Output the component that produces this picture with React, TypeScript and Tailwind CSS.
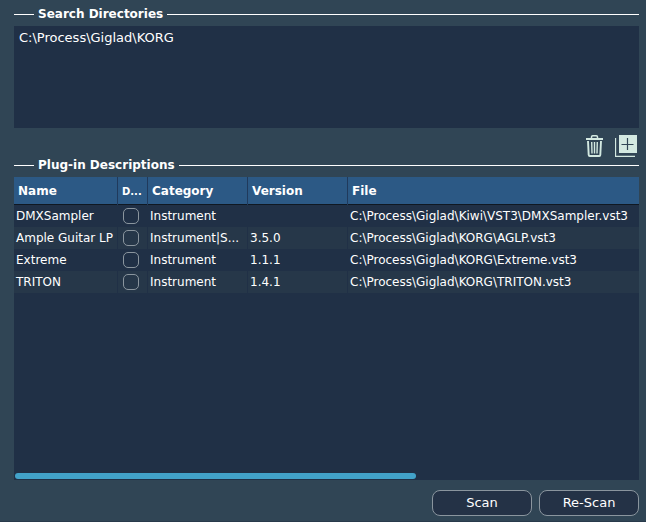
import { useState } from "react";

const directories = ["C:\\Process\\Giglad\\KORG"];

const plugins = [
  {
    name: "DMXSampler",
    category: "Instrument",
    version: "",
    file: "C:\\Process\\Giglad\\Kiwi\\VST3\\DMXSampler.vst3",
  },
  {
    name: "Ample Guitar LP",
    category: "Instrument|S...",
    version: "3.5.0",
    file: "C:\\Process\\Giglad\\KORG\\AGLP.vst3",
  },
  {
    name: "Extreme",
    category: "Instrument",
    version: "1.1.1",
    file: "C:\\Process\\Giglad\\KORG\\Extreme.vst3",
  },
  {
    name: "TRITON",
    category: "Instrument",
    version: "1.4.1",
    file: "C:\\Process\\Giglad\\KORG\\TRITON.vst3",
  },
];

function SectionTitle({ title }: { title: string }) {
  return (
    <div className="flex h-4 items-center gap-1">
      <div className="h-px w-5 bg-white" />
      <h2 className="text-[12px] leading-4 font-bold whitespace-nowrap">{title}</h2>
      <div className="h-px flex-1 bg-white" />
    </div>
  );
}

function TrashIcon() {
  return (
    <svg width="17" height="22" viewBox="0 0 17 22" fill="none" stroke="#d3e9e1">
      <path d="M5.500 3V2Q5.500 .8 6.700 .8h3.600Q11.500 .8 11.500 2V3" strokeWidth="1.500" />
      <path d="M0 4h17" strokeWidth="2" />
      <path d="M2 6L2.700 20Q2.800 21 3.700 21H13.300Q14.200 21 14.300 20L15 6" strokeWidth="1.900" />
      <path d="M5.700 7L6 18.500M8.500 7V18.500M11.300 7L11 18.500" strokeWidth="1.400" />
    </svg>
  );
}

function AddIcon() {
  return (
    <svg width="22" height="22" viewBox="0 0 22 22" fill="none">
      <path d="M.5 3v18.500H20" stroke="#d3e9e1" strokeWidth="1.300" />
      <path d="M4 0h18v18H4z" fill="#d3e9e1" />
      <path d="M12.500 3v12M6.500 9.500h12" stroke="#304555" strokeWidth="1.200" />
    </svg>
  );
}

export default function App() {
  const [disabled, setDisabled] = useState<string[]>([]);

  const toggle = (name: string) => {
    setDisabled((prev) =>
      prev.includes(name) ? prev.filter((n) => n !== name) : [...prev, name]
    );
  };

  return (
    <div className="flex min-h-screen w-full flex-col border-b border-[#283a4b] bg-[#304555] pt-1.5 pr-[7px] pb-[5px] pl-3.5 font-['DejaVu_Sans',sans-serif] text-[12px] text-white">
      <SectionTitle title="Search Directories" />
      <ul className="mt-1 h-[102px] overflow-y-auto bg-[#203046] px-[5px] py-1 text-[13px]">
        {directories.map((dir) => (
          <li key={dir} className="leading-4">
            {dir}
          </li>
        ))}
      </ul>

      <div className="flex items-center justify-end gap-3 px-0.5 pt-[7px]">
        <button type="button" aria-label="Remove directory">
          <TrashIcon />
        </button>
        <button type="button" aria-label="Add directory">
          <AddIcon />
        </button>
      </div>

      <SectionTitle title="Plug-in Descriptions" />
      <div className="mt-1 flex flex-1 flex-col overflow-hidden bg-[#203046]">
        <table className="w-full table-fixed border-separate border-spacing-0 text-left">
          <colgroup>
            <col className="w-[104px]" />
            <col className="w-[30px]" />
            <col className="w-[100px]" />
            <col className="w-[100px]" />
            <col />
          </colgroup>
          <thead>
            <tr className="h-7 bg-[#2c5985] whitespace-nowrap shadow-[inset_0_-1px_0_#101822]">
              <th className="border-r border-[#203a5c] px-1">Name</th>
              <th className="border-r border-[#203a5c] pl-1 text-[10px]">D...</th>
              <th className="border-r border-[#203a5c] px-1">Category</th>
              <th className="border-r border-[#203a5c] px-1">Version</th>
              <th className="px-1">File</th>
            </tr>
          </thead>
          <tbody>
            {plugins.map((plugin) => (
              <tr key={plugin.name} className="h-[22px] whitespace-nowrap even:bg-[#263749]">
                <td className="border-r border-[#203046] pl-0.5">{plugin.name}</td>
                <td className="border-r border-[#203046]">
                  <input
                    type="checkbox"
                    aria-label={"Disable " + plugin.name}
                    checked={disabled.includes(plugin.name)}
                    onChange={() => toggle(plugin.name)}
                    className="ml-[5px] block size-4 appearance-none rounded-[5px] border border-[#8a959e] checked:bg-[#42a2c9]"
                  />
                </td>
                <td className="border-r border-[#203046] pl-0.5">{plugin.category}</td>
                <td className="border-r border-[#203046] pl-0.5">{plugin.version}</td>
                <td className="pl-0.5">{plugin.file}</td>
              </tr>
            ))}
          </tbody>
        </table>
        <div className="mt-auto px-px pb-px">
          <div className="h-1.5 w-[64.3%] rounded-full bg-[#42a2c9]" />
        </div>
      </div>

      <div className="mt-2.5 flex justify-end gap-[7px] text-[13px]">
        <button type="button" className="h-[26px] w-[100px] rounded-lg border border-[#8a959e] bg-[#243246]">
          Scan
        </button>
        <button type="button" className="h-[26px] w-[100px] rounded-lg border border-[#8a959e] bg-[#243246]">
          Re-Scan
        </button>
      </div>
    </div>
  );
}
